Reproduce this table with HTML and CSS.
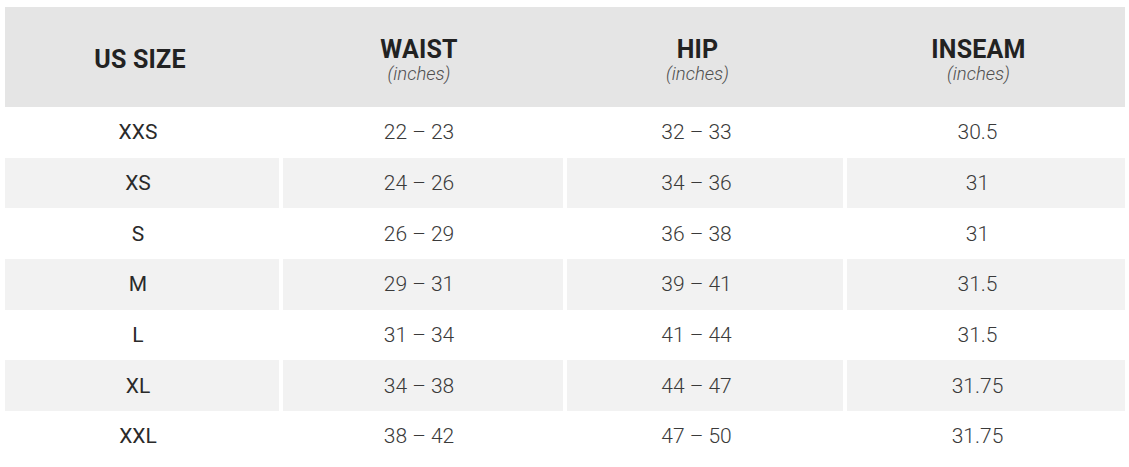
FILE: index.html
```html
<!DOCTYPE html>
<html lang="en">
<head>
<meta charset="utf-8">
<title>Size chart</title>
<link rel="stylesheet" href="styles.css">
</head>
<body>
<div class="chart">
  <div class="head">
    <div class="hcell"><span class="htitle">US SIZE</span></div>
    <div class="hcell"><span class="htitle">WAIST</span><span class="unit">(inches)</span></div>
    <div class="hcell"><span class="htitle">HIP</span><span class="unit">(inches)</span></div>
    <div class="hcell"><span class="htitle">INSEAM</span><span class="unit">(inches)</span></div>
  </div>
  <div class="row"><div class="cell size">XXS</div><div class="cell">22 – 23</div><div class="cell">32 – 33</div><div class="cell">30.5</div></div>
  <div class="row alt"><div class="cell size">XS</div><div class="cell">24 – 26</div><div class="cell">34 – 36</div><div class="cell">31</div></div>
  <div class="row"><div class="cell size">S</div><div class="cell">26 – 29</div><div class="cell">36 – 38</div><div class="cell">31</div></div>
  <div class="row alt"><div class="cell size">M</div><div class="cell">29 – 31</div><div class="cell">39 – 41</div><div class="cell">31.5</div></div>
  <div class="row"><div class="cell size">L</div><div class="cell">31 – 34</div><div class="cell">41 – 44</div><div class="cell">31.5</div></div>
  <div class="row alt"><div class="cell size">XL</div><div class="cell">34 – 38</div><div class="cell">44 – 47</div><div class="cell">31.75</div></div>
  <div class="row"><div class="cell size">XXL</div><div class="cell">38 – 42</div><div class="cell">47 – 50</div><div class="cell">31.75</div></div>
</div>
</body>
</html>
```

FILE: styles.css
```css
html, body {
  margin: 0;
  padding: 0;
  background: #ffffff;
}

body {
  font-family: Roboto, "Liberation Sans", sans-serif;
  color: #333333;
}

.chart {
  width: 1120px;
  margin: 7px 0 0 5px;
}

.head {
  display: grid;
  grid-template-columns: 278px 280px 280px 282px;
  height: 100px;
  background: #e5e5e5;
}

.hcell {
  display: flex;
  flex-direction: column;
  align-items: center;
  justify-content: center;
  padding-right: 8px;
  padding-top: 6px;
}

.hcell:first-child {
  padding-top: 6px;
}

.hcell:nth-child(3),
.hcell:nth-child(4) {
  padding-right: 11px;
}

.htitle {
  font-weight: 700;
  font-size: 25px;
  line-height: 28px;
  color: #222222;
  letter-spacing: 0.2px;
}

.unit {
  font-style: italic;
  font-weight: 300;
  font-size: 18.5px;
  line-height: 20px;
  color: #4f4f4f;
}

.row {
  display: grid;
  grid-template-columns: 274px 280px 276px 278px;
  column-gap: 4px;
  height: 50.7px;
}

.cell {
  display: flex;
  align-items: center;
  justify-content: center;
  padding-right: 8px;
  font-size: 21px;
  font-weight: 300;
  color: #3a3a3a;
}

.cell:nth-child(3),
.cell:nth-child(4) {
  padding-right: 17px;
}

.cell.size {
  font-weight: 400;
  color: #2a2a2a;
}

.row.alt .cell {
  background: #f2f2f2;
}
```
